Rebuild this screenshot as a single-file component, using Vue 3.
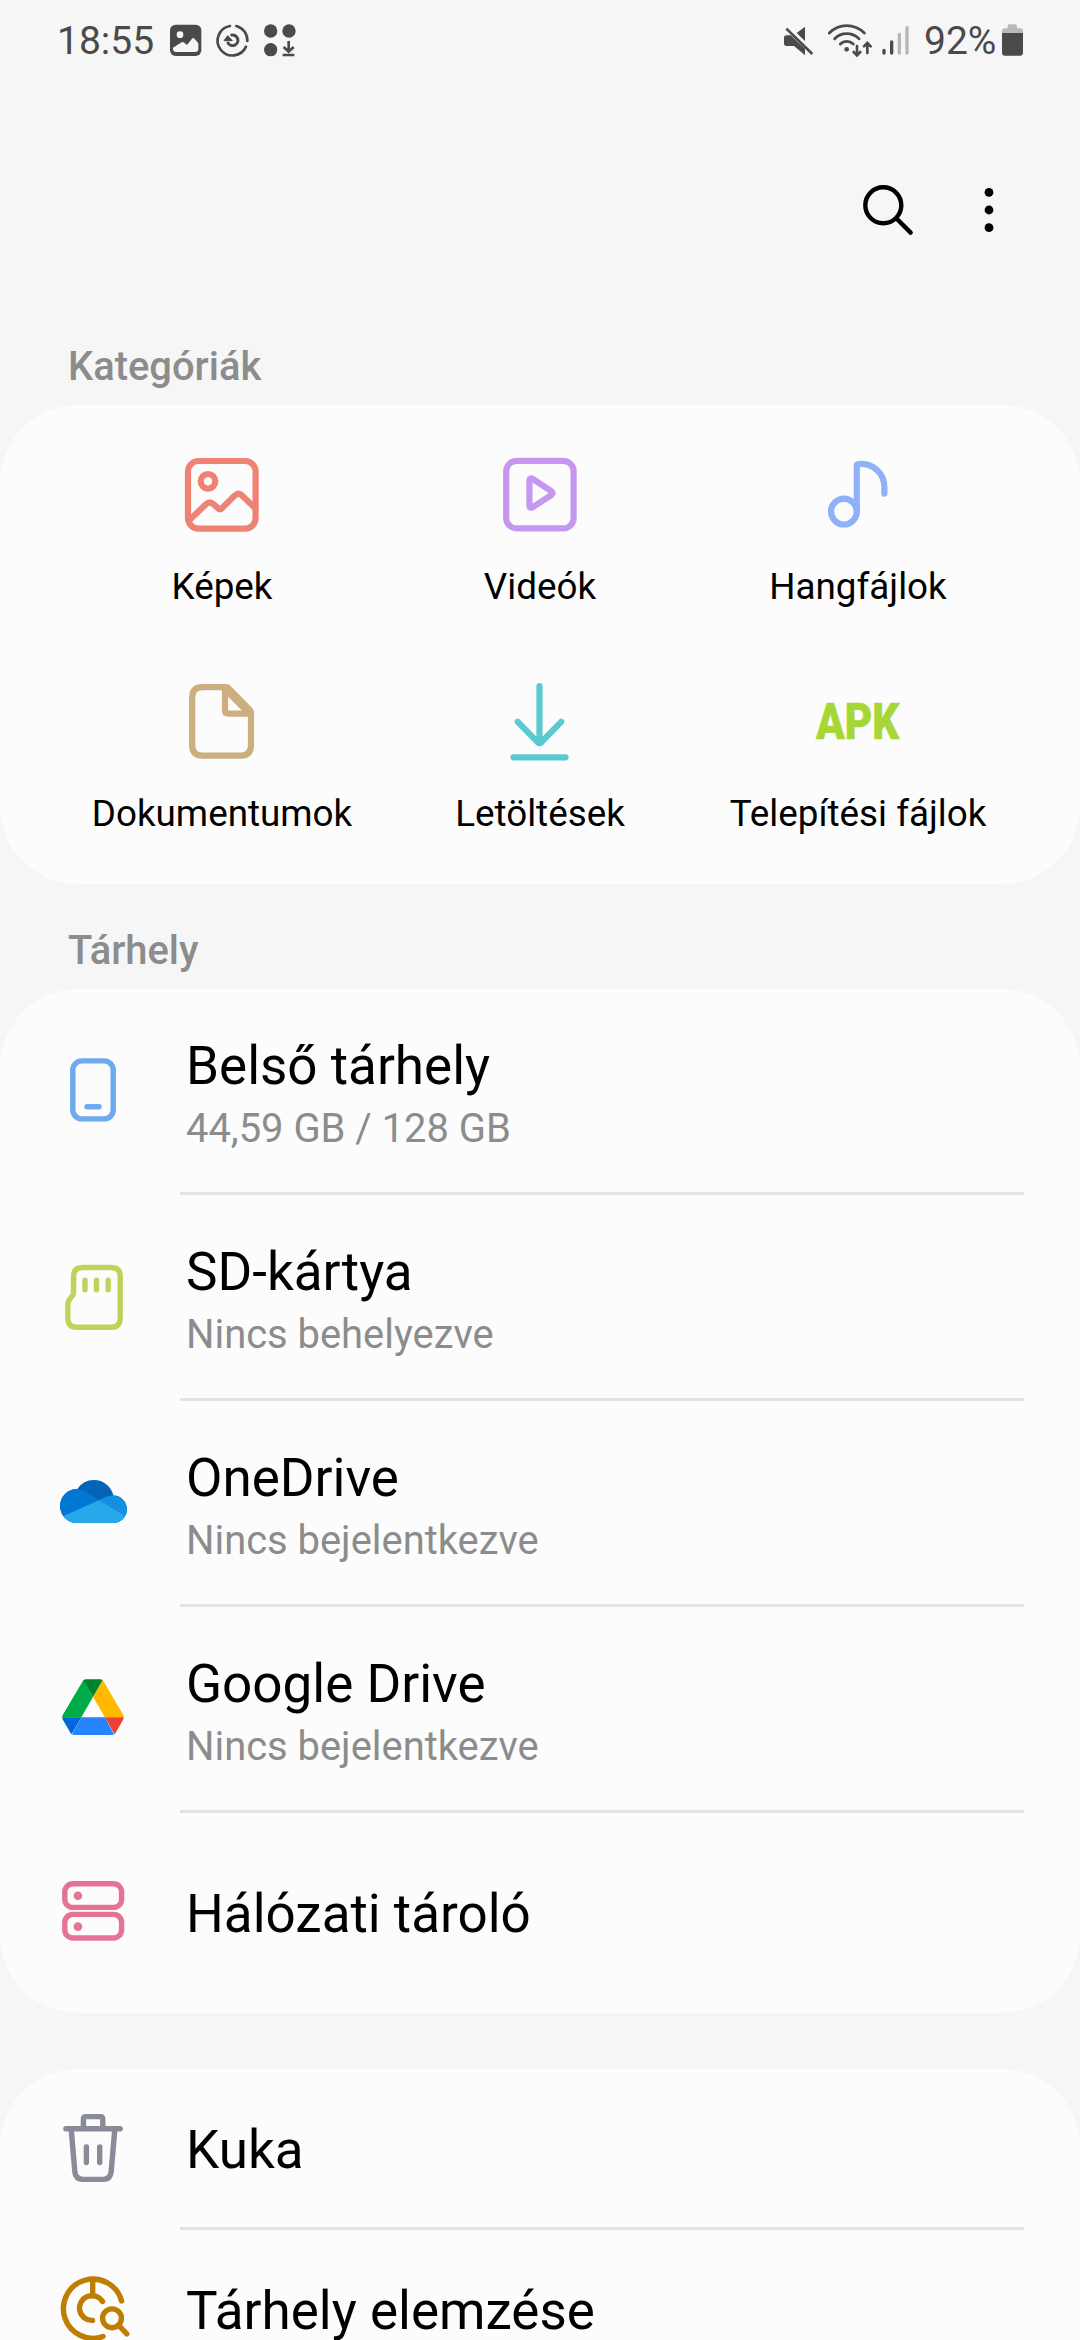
<script setup>
const storage = [
  { icon: 'phone', title: 'Belső tárhely', sub: '44,59 GB / 128 GB' },
  { icon: 'sd', title: 'SD-kártya', sub: 'Nincs behelyezve' },
  { icon: 'onedrive', title: 'OneDrive', sub: 'Nincs bejelentkezve' },
  { icon: 'gdrive', title: 'Google Drive', sub: 'Nincs bejelentkezve' },
]
</script>

<template>
  <div class="screen">
    <header class="status">
      <span class="time">18:55</span>
      <svg class="status-left" viewBox="380 33 400 114">
        <rect x="389" y="44" width="94" height="94" rx="17" fill="#4a4a4a" />
        <circle cx="419" cy="74" r="10" fill="#f6f6f6" />
        <path d="M398 113L424 97Q428 94 432 98L440 105L455 86Q459 82 463 87L474 100V116Q474 126 464 126H408Q398 126 398 117Z" fill="#f6f6f6" />
        <g fill="none" stroke="#4a4a4a" stroke-width="8" stroke-linecap="round">
          <path d="M588 48A44.5 44.5 0 0 1 621 93M617 110A44.5 44.5 0 1 1 569 48" />
          <path d="M574 75A16 16 0 1 1 563 99" stroke-width="9" />
        </g>
        <path d="M551 92L562 77L576 92Z" fill="#4a4a4a" stroke="#4a4a4a" stroke-width="3" stroke-linejoin="round" />
        <circle cx="691" cy="63" r="20" fill="#4a4a4a" />
        <circle cx="746" cy="63" r="20" fill="#4a4a4a" />
        <circle cx="691" cy="119" r="20" fill="#4a4a4a" />
        <path d="M745 93V124M730 111L745 125L760 111M727 135H762" fill="none" stroke="#4a4a4a" stroke-width="8" />
      </svg>
      <span class="grow"></span>
      <svg class="status-right" viewBox="36 33 390 114">
        <g fill="#4a4a4a">
          <path d="M105 50V93L80 69Z" />
          <path d="M50 76H62L105 116V136L72 108H50Q42 108 42 100V84Q42 76 50 76Z" />
        </g>
        <path d="M49 56L127 132" stroke="#4a4a4a" stroke-width="8" />
        <g fill="none" stroke="#4a4a4a" stroke-width="8.5" stroke-linecap="round">
          <path d="M178 69Q200 47 230 47T283 69" />
          <path d="M194 86Q209 71 230 71T267 86" />
          <path d="M211 102Q219 94 230 94T250 102" />
          <path d="M261 108V135M251 126L261 136L271 126M292 129V101M282 109L292 99L302 109" stroke-width="8" />
        </g>
        <circle cx="230" cy="118" r="7" fill="#4a4a4a" />
        <g stroke-width="10" stroke-linecap="round">
          <path d="M342 121V129M365 96V129" stroke="#4a4a4a" />
          <path d="M388 73V129M411 53V129" stroke="#b7b7b7" />
        </g>
      </svg>
      <span class="percent">92%</span>
      <svg class="battery" viewBox="693 33 69 114">
        <path d="M713 55V48Q713 43 718 43H736Q741 43 741 48V55H750Q759 55 759 64V72H696V64Q696 55 705 55Z" fill="#bababa" />
        <path d="M696 69H759V128Q759 137 750 137H705Q696 137 696 128Z" fill="#4a4a4a" />
      </svg>
    </header>

    <div class="toolbar">
      <svg class="search" viewBox="0 0 60 60">
        <g fill="none" stroke="#000" stroke-width="4.4" stroke-linecap="round">
          <circle cx="25.3" cy="25.3" r="18" />
          <path d="M38.5 38.5L52.6 52.6" />
        </g>
      </svg>
      <svg class="more" viewBox="0 0 12 60">
        <circle cx="6" cy="12.3" r="4.4" />
        <circle cx="6" cy="30" r="4.4" />
        <circle cx="6" cy="47.7" r="4.4" />
      </svg>
    </div>

    <h2 class="heading first">Kategóriák</h2>
    <section class="card categories">
      <div class="cat">
        <svg viewBox="0 0 96 96" class="line" stroke="#f08274">
          <rect x="14" y="14" width="67.6" height="67.6" rx="10.5" />
          <circle cx="34" cy="34.3" r="7.3" />
          <path d="M15.5 73L32 57.2Q35.8 53.8 39.4 57.2L44 61.2Q46 63.2 48.2 61L60.8 48.4Q64.4 45 68 48.4L81 61" />
        </svg>
        <span>Képek</span>
      </div>
      <div class="cat">
        <svg viewBox="0 0 96 96" class="line" stroke="#c697f1">
          <rect x="14.2" y="13.8" width="67.4" height="67.6" rx="10.5" />
          <path d="M37.4 34.2Q37.4 30 41 32.2L59.6 44.4Q61.9 46.1 59.6 47.8L41 60Q37.4 62.2 37.4 58Z" />
        </svg>
        <span>Videók</span>
      </div>
      <div class="cat">
        <svg viewBox="0 0 96 96" class="line" stroke="#8eb1fa">
          <circle cx="33.9" cy="64.6" r="12.9" />
          <path d="M46.8 64.6V18.6Q46.8 17 48.6 17C64 16 74.4 27 74.4 40.5V46.6" />
        </svg>
        <span>Hangfájlok</span>
      </div>
      <div class="cat">
        <svg viewBox="0 0 96 96" class="line" stroke="#ccae7f">
          <path d="M27.6 13.2H52Q53.6 13.2 55 14.6L75.6 35.6Q77 37 77 38.6V71.2Q77 81.6 66.6 81.6H28.6Q18.2 81.6 18.2 71.2V23.6Q18.2 13.2 28.6 13.2Z" />
          <path d="M51 15V36.5Q51 39.6 54.2 39.6H76M53 17L74 38.4" />
        </svg>
        <span>Dokumentumok</span>
      </div>
      <div class="cat">
        <svg viewBox="0 0 96 96" class="line" stroke="#5bcad0">
          <path d="M47.5 12V68M25.8 47.8L45.6 68.2Q47.5 70 49.4 68.2L69.2 47.8M21.5 83.3H73.5" />
        </svg>
        <span>Letöltések</span>
      </div>
      <div class="cat">
        <svg viewBox="-22 0 140 96" class="wide">
          <text class="apk" x="6" y="65" textLength="83.4" lengthAdjust="spacingAndGlyphs">APK</text>
        </svg>
        <span>Telepítési fájlok</span>
      </div>
    </section>

    <h2 class="heading">Tárhely</h2>
    <section class="card">
      <div v-for="row in storage" :key="row.title" class="row double">
        <svg v-if="row.icon === 'phone'" class="icon thin" viewBox="0 0 84 84" stroke="#6fa9ee">
          <rect x="21.8" y="12.9" width="40.4" height="58" rx="9" />
          <path d="M36 58.7H48" />
        </svg>
        <svg v-else-if="row.icon === 'sd'" class="icon thin" viewBox="0 0 84 84" stroke="#c1d25b">
          <path d="M31.5 13.5H60.2Q69.2 13.5 69.2 22.5V64.2Q69.2 73.2 60.2 73.2H25.8Q16.8 73.2 16.8 64.2V51Q16.8 47.5 19 44.8L21.4 42Q22.6 40.4 22.6 38V22.5Q22.6 13.5 31.5 13.5Z" />
          <path d="M34 26.3V35.8M45.5 26.3V35.8M57.2 26.3V35.8" />
        </svg>
        <svg v-else-if="row.icon === 'onedrive'" class="icon" viewBox="0 0 84 84">
          <defs>
            <clipPath id="cloud">
              <circle cx="43" cy="40" r="20" />
              <circle cx="26" cy="46" r="17" />
              <circle cx="62.2" cy="49.3" r="13.7" />
              <rect x="26" y="40" width="36.2" height="23" />
            </clipPath>
          </defs>
          <g clip-path="url(#cloud)">
            <rect width="84" height="84" fill="#0364b8" />
            <path d="M0 20L26.5 29.1Q31 29.6 35 32.2L48 40.3V63H0Z" fill="#0078d4" />
            <path d="M48 40.3Q55 35.6 62.2 35.4L84 33V63H48Z" fill="#1490df" />
            <path d="M0 61.6L12.6 56L48 40.3L84 62V70H0Z" fill="#28a8ea" />
          </g>
        </svg>
        <svg v-else class="icon" viewBox="0 0 84 84">
          <defs>
            <clipPath id="drive">
              <path d="M35 13.3H49.3Q51.4 13.3 52.5 15.2L72 48.5Q73.6 51.3 72 54L64.4 67.2Q63.3 69 61.2 69H23Q20.8 69 19.7 67.2L12 54Q10.4 51.3 12 48.5L31.7 15.2Q32.8 13.3 35 13.3Z" />
            </clipPath>
          </defs>
          <g clip-path="url(#drive)">
            <path d="M32 13L42 31L30.3 51.3H8V48Z" fill="#00ac47" />
            <path d="M31.5 13H52.5L42.1 31Z" fill="#00832d" />
            <path d="M52.3 13L42.1 31L53.9 51.3H76V48Z" fill="#ffba00" />
            <path d="M8 51.3H30.3L20.2 69H8Z" fill="#0066da" />
            <path d="M30.3 51.3H53.9L64 70H20Z" fill="#2684fc" />
            <path d="M53.9 51.3H76V69H64Z" fill="#ea4335" />
          </g>
        </svg>
        <div class="body">
          <div class="title">{{ row.title }}</div>
          <div class="sub">{{ row.sub }}</div>
        </div>
      </div>
      <div class="row network">
        <svg class="icon thin" viewBox="0 0 84 84" stroke="#e57494">
          <rect x="13.8" y="14.8" width="56.8" height="23.6" rx="8" />
          <rect x="13.8" y="45.4" width="56.8" height="23.6" rx="8" />
          <g fill="#e57494" stroke="none">
            <circle cx="26.9" cy="26.7" r="4.3" />
            <circle cx="26.9" cy="57.6" r="4.3" />
          </g>
        </svg>
        <div class="body"><div class="title">Hálózati tároló</div></div>
      </div>
    </section>

    <section class="card tools">
      <div class="row single">
        <svg class="icon thin" viewBox="0 0 84 84" stroke="#898b98">
          <path d="M14.9 22.7H69.2M32.4 22V13.2Q32.4 10.6 35 10.6H49.2Q51.8 10.6 51.8 13.2V22M20.2 23L23.8 65.5Q24.5 73.4 32 73.4H52Q59.5 73.4 60.2 65.5L63.8 23M35.4 41V56.5M48.7 41V56.5" />
        </svg>
        <div class="body"><div class="title">Kuka</div></div>
      </div>
      <div class="row single">
        <svg class="icon thin" viewBox="0 0 84 84" stroke="#bf7d04">
          <path d="M70.6 34A29.6 29.6 0 1 0 52 69.5" />
          <path d="M41.7 13V29M51.5 34.5A12.4 12.4 0 1 0 41.5 53.4" />
          <circle cx="61" cy="51.3" r="9.4" />
          <path d="M68 58.6L75.8 66.8" />
        </svg>
        <div class="body"><div class="title">Tárhely elemzése</div></div>
      </div>
    </section>
  </div>
</template>

<style>
body {
  margin: 0;
  background: #f6f6f6;
}
</style>

<style scoped>
.screen {
  width: 1080px;
  height: 2340px;
  overflow: hidden;
  background: #f6f6f6;
  font-family: Roboto, sans-serif;
  color: #000;
}
svg {
  display: block;
  flex: none;
}
.status {
  display: flex;
  height: 80px;
  padding: 0 56px 0 57px;
  box-sizing: border-box;
  color: #4a4a4a;
  font-size: 39px;
  line-height: 46px;
}
.time,
.percent {
  padding-top: 18px;
}
.time {
  width: 109.7px;
}
.grow {
  flex: 1;
}
.percent {
  width: 77px;
}
.status-left {
  width: 133.33px;
  height: 38px;
  margin-top: 21px;
}
.status-right {
  width: 130px;
  height: 38px;
  margin: 21px 12px 0 0;
}
.battery {
  width: 23px;
  height: 38px;
  margin-top: 21px;
}
.toolbar {
  display: flex;
  justify-content: flex-end;
  gap: 64.7px;
  height: 160px;
  padding: 100px 85.3px 0 0;
  box-sizing: border-box;
}
.search {
  width: 60px;
  height: 60px;
}
.more {
  width: 12px;
  height: 60px;
}
.heading {
  margin: 0;
  height: 105px;
  padding: 44px 68px 0;
  box-sizing: border-box;
  font-size: 39.9px;
  line-height: 46px;
  font-weight: 500;
  color: #8c8c8c;
}
.heading.first {
  height: 165px;
  padding-top: 104px;
}
.card {
  background: #fcfcfc;
  border-radius: 78px;
  box-sizing: border-box;
}
.categories {
  display: grid;
  grid-template-columns: repeat(3, 318px);
  grid-auto-rows: 227px;
  height: 479px;
  padding: 42px 63px 0;
}
.cat {
  display: flex;
  flex-direction: column;
  align-items: center;
  font-size: 36.8px;
  line-height: 42px;
  white-space: nowrap;
}
.cat svg {
  width: 96px;
  height: 96px;
  margin-bottom: 23px;
}
.cat .wide {
  width: 140px;
}
.line {
  fill: none;
  stroke-width: 6.2;
  stroke-linecap: round;
  stroke-linejoin: round;
}
.apk {
  font-family: Roboto, sans-serif;
  font-size: 50px;
  font-weight: 900;
  fill: #a6d737;
  stroke: #a6d737;
  stroke-width: 0.5;
}
.row {
  display: flex;
  padding-left: 51px;
}
.icon {
  width: 84px;
  height: 84px;
}
.thin {
  fill: none;
  stroke-width: 5.4;
  stroke-linecap: round;
  stroke-linejoin: round;
}
.body {
  flex: 1;
  margin: 0 56px 0 45px;
  padding-left: 6px;
  box-sizing: border-box;
}
.double .body,
.single .body {
  border-bottom: 3px solid #e3e3e3;
}
.double .body {
  height: 206px;
  padding-top: 45px;
}
.double .icon {
  margin-top: 59px;
}
.network {
  height: 200px;
}
.network .icon {
  margin-top: 56px;
}
.network .body {
  padding-top: 69px;
}
.single .body {
  height: 161px;
  padding-top: 49px;
}
.single .icon {
  margin-top: 37px;
}
.title {
  font-size: 53px;
  line-height: 64px;
}
.sub {
  margin-top: 8px;
  font-size: 39.9px;
  line-height: 46px;
  color: #8c8c8c;
}
.tools {
  margin-top: 56px;
  height: 400px;
}
</style>
